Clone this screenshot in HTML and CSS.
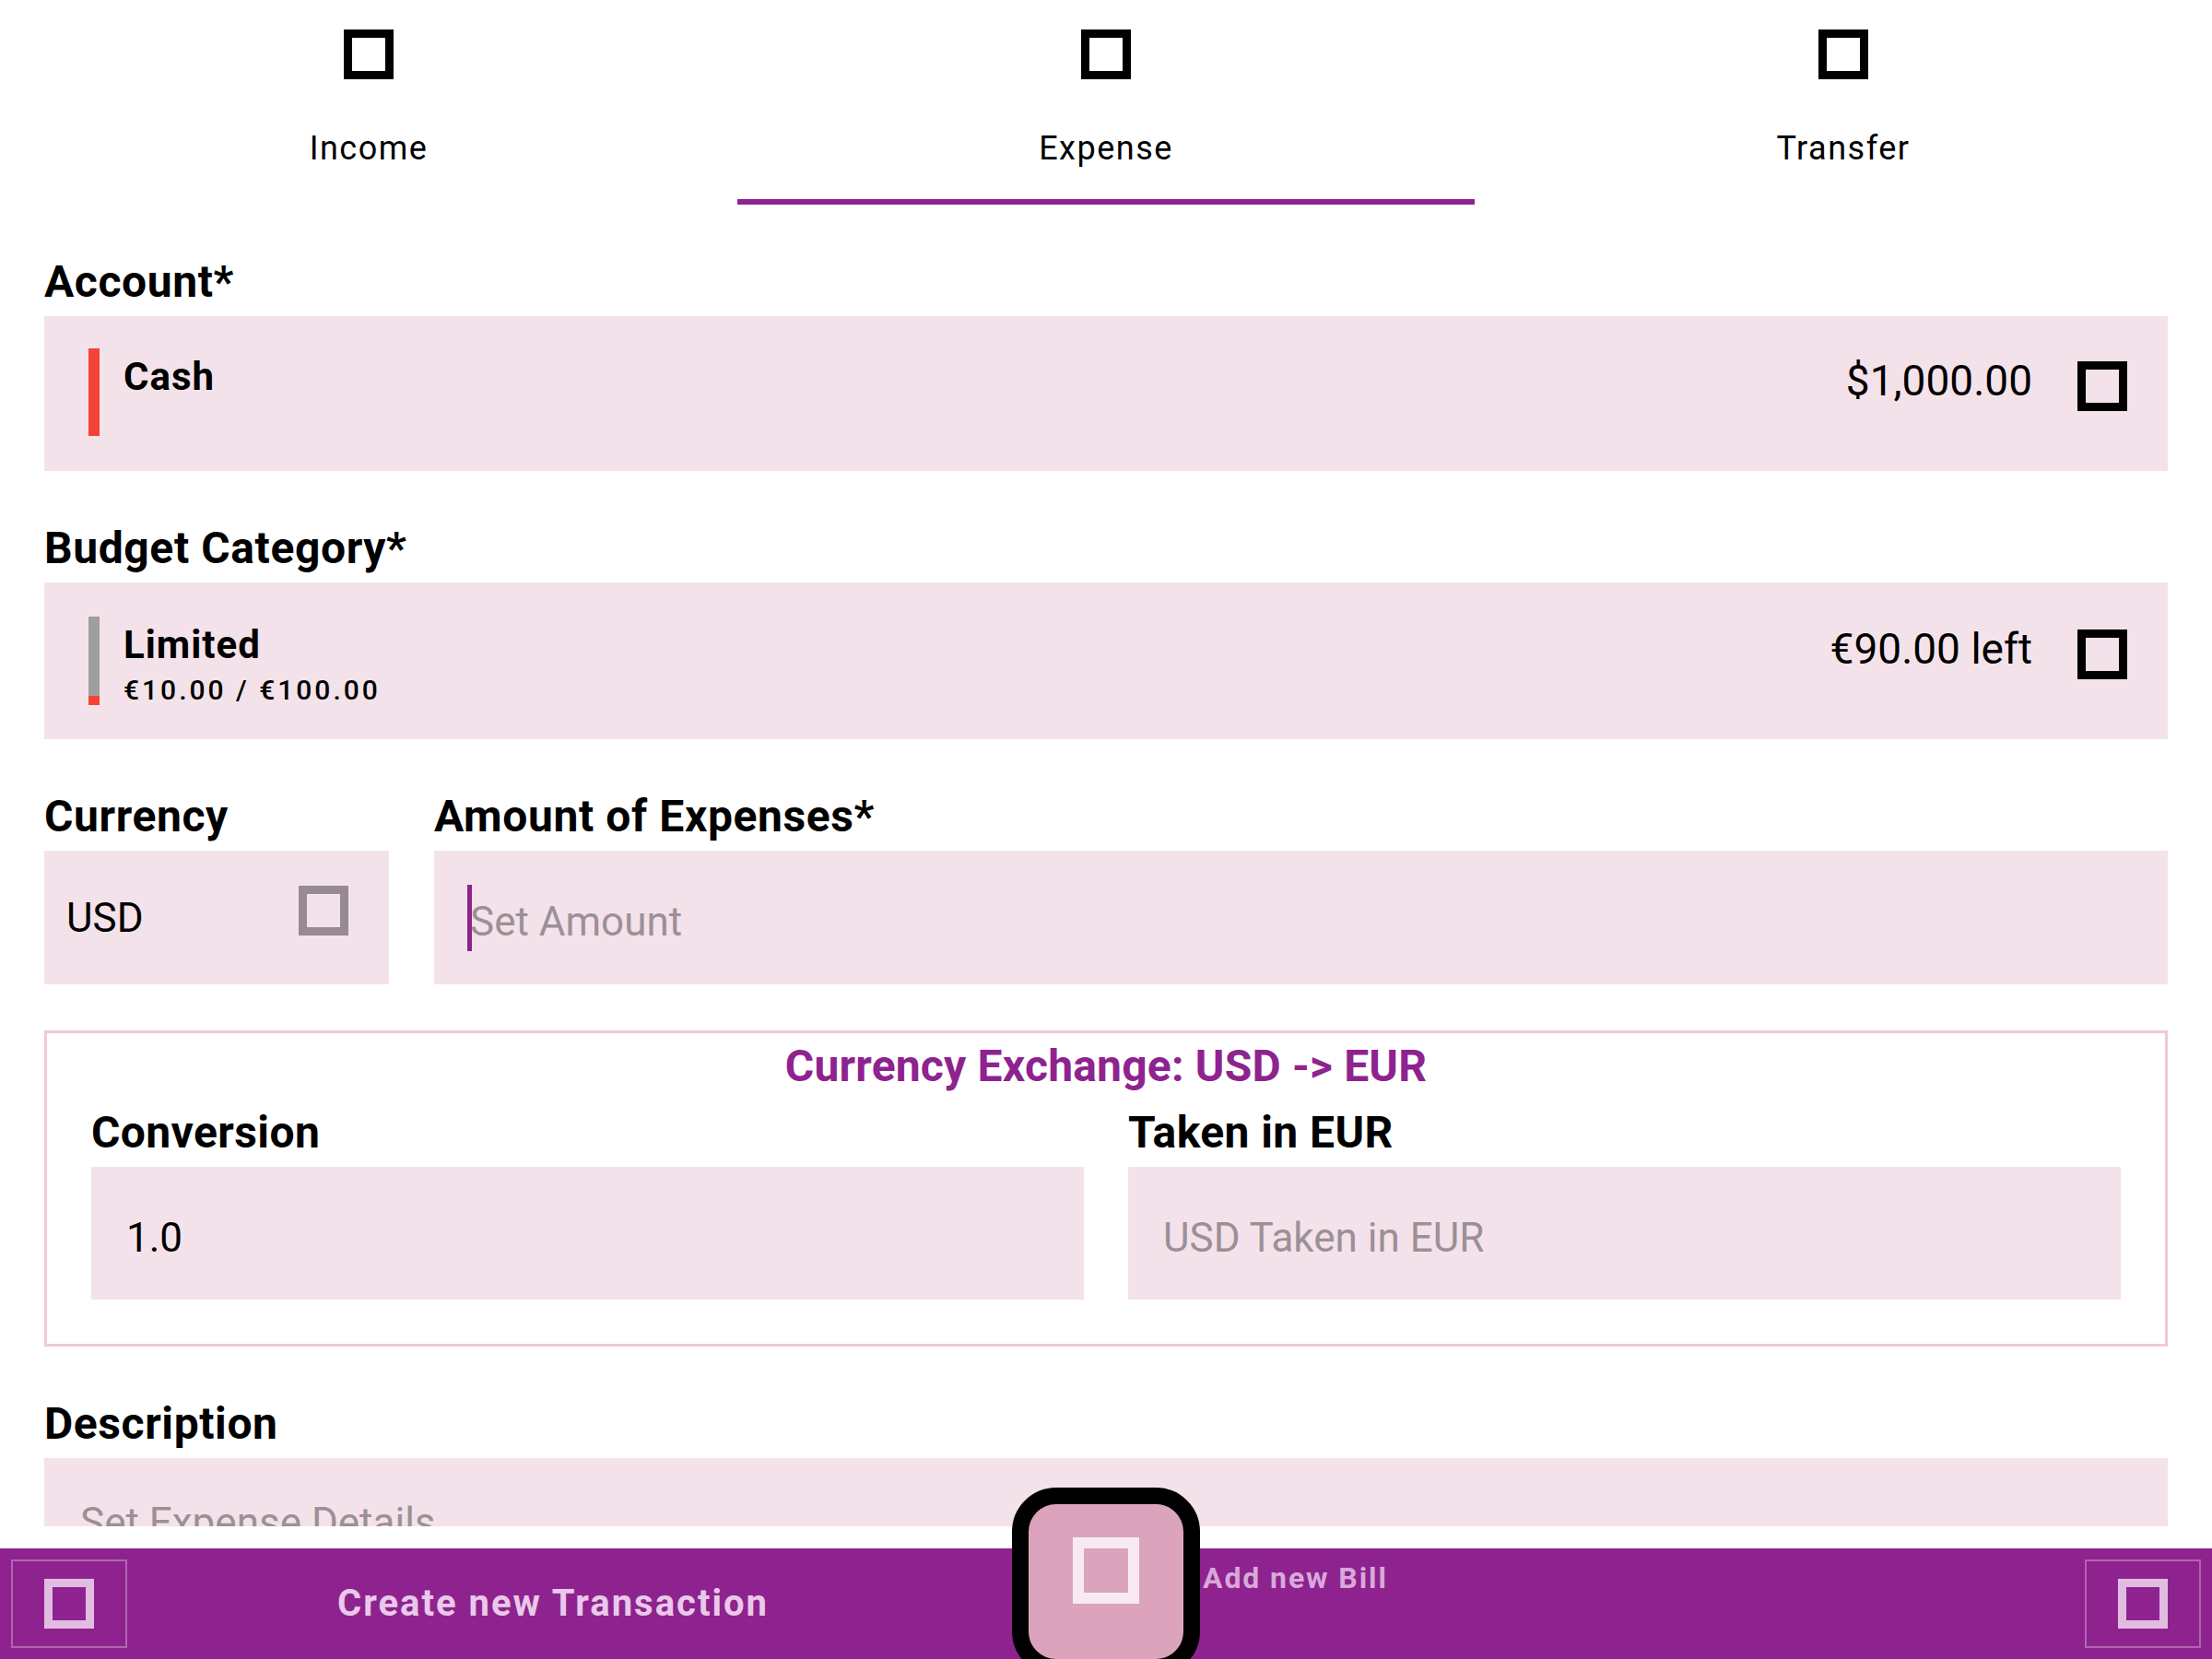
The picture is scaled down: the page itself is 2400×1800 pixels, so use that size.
FILE: index.html
```html
<!DOCTYPE html>
<html lang="en">
<head>
<meta charset="utf-8">
<title>New Transaction</title>
<link rel="stylesheet" href="styles.css">
</head>
<body>
<div class="app">
  <div class="scroll">
    <nav class="tabs">
      <div class="tab"><span class="glyph"></span><span class="tab-label">Income</span></div>
      <div class="tab tab-active"><span class="glyph"></span><span class="tab-label">Expense</span></div>
      <div class="tab"><span class="glyph"></span><span class="tab-label">Transfer</span></div>
    </nav>

    <div class="form">
      <section class="group">
        <div class="label">Account*</div>
        <div class="field select-field">
          <div class="bar bar-red"></div>
          <div class="item-text">
            <div class="item-title">Cash</div>
          </div>
          <div class="item-right">
            <span class="item-value">$1,000.00</span>
            <span class="glyph"></span>
          </div>
        </div>
      </section>

      <section class="group">
        <div class="label">Budget Category*</div>
        <div class="field select-field budget-field">
          <div class="bar bar-progress"><div class="bar-fill"></div></div>
          <div class="item-text">
            <div class="item-title">Limited</div>
            <div class="item-sub">€10.00 / €100.00</div>
          </div>
          <div class="item-right">
            <span class="item-value">€90.00 left</span>
            <span class="glyph"></span>
          </div>
        </div>
      </section>

      <section class="group currency-row">
        <div class="col">
          <div class="label">Currency</div>
          <div class="field currency-field">
            <span class="input-text">USD</span>
            <span class="glyph glyph-grey"></span>
          </div>
        </div>
        <div class="col">
          <div class="label">Amount of Expenses*</div>
          <div class="field amount-field">
            <span class="cursor"></span>
            <span class="placeholder amount-ph">Set Amount</span>
          </div>
        </div>
      </section>

      <section class="exchange">
        <div class="exchange-title">Currency Exchange: USD -&gt; EUR</div>
        <div class="exchange-grid">
          <div class="col">
            <div class="sublabel">Conversion</div>
            <div class="field ex-field"><span class="input-text ex-text">1.0</span></div>
          </div>
          <div class="col">
            <div class="sublabel">Taken in EUR</div>
            <div class="field ex-field"><span class="placeholder ex-text">USD Taken in EUR</span></div>
          </div>
        </div>
      </section>

      <section class="group">
        <div class="label">Description</div>
        <div class="field desc-field"><span class="placeholder">Set Expense Details</span></div>
      </section>
    </div>
  </div>

  <footer class="bottom">
    <div class="bottom-gap"></div>
    <div class="bottom-bar">
      <div class="bar-half bar-left">
        <div class="icon-btn"><span class="glyph glyph-light"></span></div>
        <div class="create-text">Create new Transaction</div>
      </div>
      <div class="bar-half bar-right">
        <div class="bill-text">Add new Bill</div>
        <div class="icon-btn"><span class="glyph glyph-light"></span></div>
      </div>
    </div>
  </footer>

  <div class="fab"><span class="glyph glyph-fab"></span></div>
</div>
</body>
</html>
```

FILE: styles.css
```css
* { box-sizing: border-box; }

html, body {
  margin: 0;
  padding: 0;
  background: #ffffff;
}

body {
  font-family: Roboto, "Noto Sans", "Liberation Sans", sans-serif;
  color: #000000;
  width: 2400px;
  height: 1800px;
  overflow: hidden;
}

.app {
  position: relative;
  width: 2400px;
  height: 1800px;
  display: flex;
  flex-direction: column;
}

.scroll {
  height: 1656px;
  overflow: hidden;
  flex: none;
}

/* ---------- tabs ---------- */
.tabs {
  display: flex;
  height: 222px;
}

.tab {
  flex: 1;
  display: flex;
  flex-direction: column;
  align-items: center;
  padding-top: 32px;
  border-bottom: 6px solid transparent;
}

.tab-active {
  border-bottom-color: #8e238f;
}

.tab-label {
  margin-top: 57px;
  font-size: 36px;
  line-height: 36px;
  letter-spacing: 1.5px;
  font-weight: 400;
}

/* generic placeholder glyph (missing icon) */
.glyph {
  display: block;
  width: 54px;
  height: 54px;
  border: 9px solid #000000;
  flex: none;
}

.glyph-grey { border-color: #978b91; }
.glyph-light { border-color: #e0bce0; }

/* ---------- form ---------- */
.form {
  padding: 0 48px;
}

.group {
  margin-top: 60px;
}

.label {
  font-size: 48px;
  line-height: 48px;
  font-weight: 700;
  letter-spacing: 0.6px;
  margin-bottom: 13px;
  white-space: nowrap;
}

.field {
  background: #f4e2ea;
}

.select-field {
  height: 168px;
  display: flex;
  align-items: flex-start;
  padding: 35px 44px 0 48px;
}

.budget-field {
  height: 170px;
  padding-top: 37px;
}

.bar {
  width: 12px;
  height: 95px;
  flex: none;
}

.bar-red { background: #f44336; }

.bar-progress {
  height: 96px;
  background: #9e9e9e;
  display: flex;
  flex-direction: column;
  justify-content: flex-end;
}

.bar-fill {
  height: 10%;
  background: #f44336;
}

.item-text {
  margin-left: 26px;
  margin-top: 10px;
}

.item-title {
  font-size: 42px;
  line-height: 42px;
  font-weight: 700;
  letter-spacing: 1px;
}

.item-sub {
  margin-top: 13px;
  font-size: 30px;
  line-height: 30px;
  font-weight: 500;
  letter-spacing: 3px;
}

.item-right {
  margin-left: auto;
  margin-top: 14px;
  display: flex;
  align-items: flex-start;
  gap: 49px;
}

.item-value {
  font-size: 46px;
  line-height: 46px;
  font-weight: 400;
  margin-top: -2px;
}

/* currency + amount */
.currency-row {
  display: grid;
  grid-template-columns: 374px 1fr;
  column-gap: 49px;
}

.currency-field {
  height: 145px;
  display: flex;
  align-items: center;
  justify-content: space-between;
  padding: 0 44px 0 24px;
}

.currency-field .glyph {
  margin-bottom: 16px;
}

.input-text {
  font-size: 44px;
  line-height: 44px;
}

.placeholder {
  font-size: 44px;
  line-height: 44px;
  color: #9c9097;
}

.amount-field {
  height: 145px;
  display: flex;
  align-items: center;
  padding-left: 36px;
}

.cursor {
  width: 5px;
  height: 72px;
  background: #8e238f;
  flex: none;
}

.amount-ph {
  margin-left: -2px;
  margin-top: 9px;
}

/* exchange box */
.exchange {
  margin-top: 50px;
  border: 3px solid #efc9da;
  padding: 12px 48px 48px;
}

.exchange-title {
  text-align: center;
  color: #8e238f;
  font-size: 48px;
  line-height: 48px;
  font-weight: 700;
  letter-spacing: 0.2px;
}

.exchange-grid {
  margin-top: 24px;
  display: grid;
  grid-template-columns: 1fr 1fr;
  column-gap: 48px;
}

.sublabel {
  font-size: 48px;
  line-height: 48px;
  font-weight: 700;
  letter-spacing: 0.4px;
  margin-bottom: 13px;
}

.ex-field {
  height: 144px;
  display: flex;
  align-items: center;
  padding-left: 38px;
}

.ex-text {
  margin-top: 10px;
}

/* description */
.desc-field {
  height: 220px;
  padding: 48px 0 0 39px;
}

/* ---------- bottom ---------- */
.bottom {
  flex: none;
  height: 144px;
  display: flex;
  flex-direction: column;
}

.bottom-gap {
  height: 24px;
  background: #ffffff;
}

.bottom-bar {
  height: 120px;
  background: #8e238f;
  display: flex;
}

.bar-half {
  width: 1200px;
  height: 120px;
}

.bar-left {
  display: grid;
  grid-template-columns: 138px 1fr 138px;
  align-items: center;
}

.icon-btn {
  width: 126px;
  height: 96px;
  border: 2px solid rgba(255, 255, 255, 0.3);
  display: flex;
  align-items: center;
  justify-content: center;
  margin-left: 12px;
}

.create-text {
  text-align: center;
  color: #e9c8e9;
  font-size: 40px;
  line-height: 40px;
  font-weight: 700;
  letter-spacing: 2px;
}

.bar-right {
  display: flex;
  align-items: center;
  padding-left: 105px;
}

.bar-right .icon-btn {
  margin-left: auto;
  margin-right: 12px;
}

.bill-text {
  align-self: flex-start;
  margin-top: 16px;
  color: #d9a8da;
  font-size: 32px;
  line-height: 32px;
  font-weight: 700;
  letter-spacing: 1.9px;
}

/* floating action button overlaps the bar */
.fab {
  position: absolute;
  left: 1098px;
  top: 1614px;
  width: 204px;
  height: 204px;
  border: 18px solid #000000;
  border-radius: 48px;
  background: #dca3bc;
  display: flex;
  justify-content: center;
  padding-top: 36px;
}

.glyph-fab {
  width: 72px;
  height: 72px;
  border: 12px solid #f8eaf2;
}
```
